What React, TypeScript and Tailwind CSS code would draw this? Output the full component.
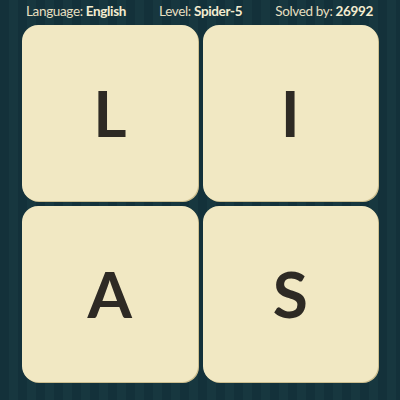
import React from "react";

const letters = ["L", "I", "A", "S"];

const App = () => {
  return (
    <div className="w-[400px] h-[400px] overflow-hidden bg-[repeating-linear-gradient(90deg,#13313a_0px,#13313a_9px,#17373f_9px,#17373f_18px)] font-['Lato',sans-serif]">
      {/* Top info bar */}
      <div className="h-[24px] flex items-center justify-between pl-[26px] pr-[27px] text-[13.5px] tracking-[-0.35px] text-[#e6dfc0] leading-none">
        <span>
          Language: <b className="font-bold text-[#f3ecd0]">English</b>
        </span>
        <span>
          Level: <b className="font-bold text-[#f3ecd0]">Spider-5</b>
        </span>
        <span>
          Solved by: <b className="font-bold text-[#f3ecd0]">26992</b>
        </span>
      </div>

      {/* Letter tiles */}
      <div className="grid grid-cols-2 gap-[5px] px-[22px] pt-[1px]">
        {letters.map((l) => (
          <div
            key={l}
            className="h-[176px] rounded-[16px] bg-[#f1e8c3] shadow-[1px_1px_0_#cdbf90] flex items-center justify-center"
          >
            <span className="text-[64px] font-bold text-[#2e2a24] leading-none">{l}</span>
          </div>
        ))}
      </div>
    </div>
  );
};

export default App;
